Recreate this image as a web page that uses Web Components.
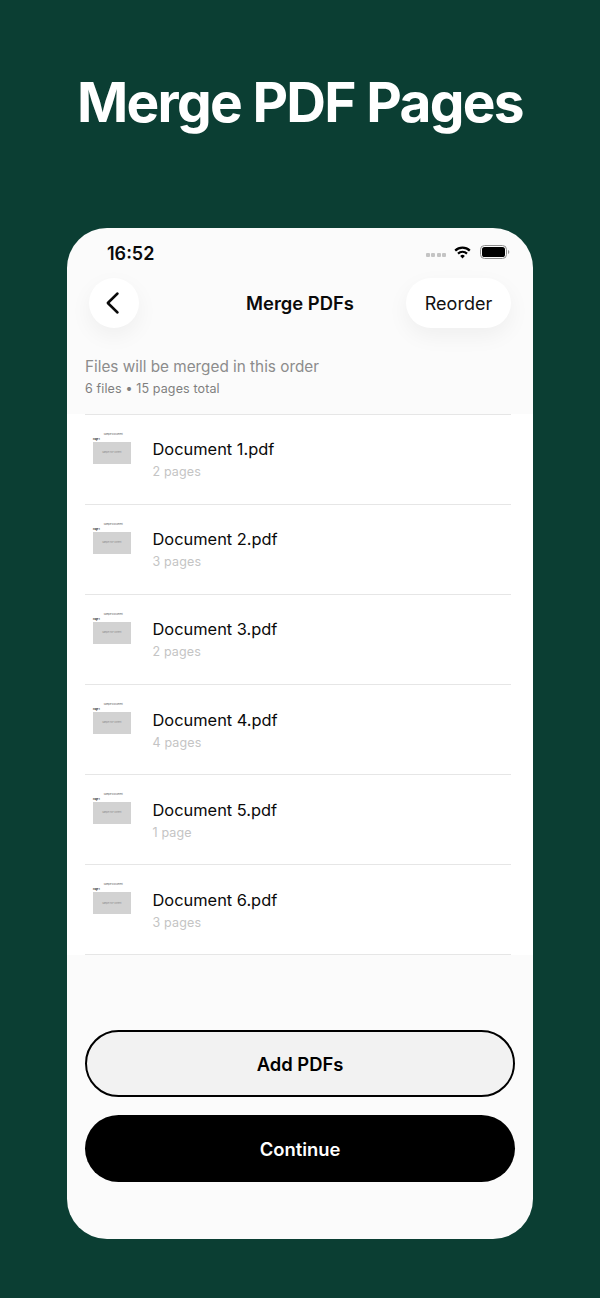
<!DOCTYPE html>
<html lang="en">
<head>
<meta charset="utf-8">
<title>Merge PDF Pages</title>
<style>
  html, body { margin: 0; padding: 0; }
  body { width: 600px; height: 1298px; overflow: hidden; background: #0b3e33; font-family: Inter, "Liberation Sans", sans-serif; }
</style>
</head>
<body>
<promo-screen heading="Merge PDF Pages">
  <status-bar time="16:52"></status-bar>
  <nav-bar heading="Merge PDFs" action="Reorder"></nav-bar>
  <merge-summary note="Files will be merged in this order" count="6 files • 15 pages total"></merge-summary>
  <doc-list>
    <doc-row name="Document 1.pdf" pages="2 pages"></doc-row>
    <doc-row name="Document 2.pdf" pages="3 pages"></doc-row>
    <doc-row name="Document 3.pdf" pages="2 pages"></doc-row>
    <doc-row name="Document 4.pdf" pages="4 pages"></doc-row>
    <doc-row name="Document 5.pdf" pages="1 page"></doc-row>
    <doc-row name="Document 6.pdf" pages="3 pages"></doc-row>
  </doc-list>
  <action-bar slot="footer">
    <pill-button kind="outline">Add PDFs</pill-button>
    <pill-button kind="solid">Continue</pill-button>
  </action-bar>
</promo-screen>

<script>
class PromoScreen extends HTMLElement {
  constructor () {
    super()
    this.attachShadow({ mode: 'open' })
  }

  connectedCallback () {
    this.shadowRoot.innerHTML = `
      <style>
        :host { display: flex; flex-direction: column; align-items: center; height: 1298px; }
        h1 {
          margin: 0; padding-top: 66px; height: 228px; flex: none; box-sizing: border-box;
          font: 700 55px/72px Inter, sans-serif; letter-spacing: -1.7px; color: #fff; white-space: nowrap;
        }
        .phone {
          width: 466px; height: 1011px; flex: none; border-radius: 40px; background: #fbfbfb;
          display: flex; flex-direction: column; overflow: hidden;
        }
        .body { flex: 1; }
      </style>
      <h1>${this.getAttribute('heading')}</h1>
      <div class="phone">
        <div class="body"><slot></slot></div>
        <slot name="footer"></slot>
      </div>
    `
  }
}

class StatusBar extends HTMLElement {
  constructor () {
    super()
    this.attachShadow({ mode: 'open' })
  }

  connectedCallback () {
    this.shadowRoot.innerHTML = `
      <style>
        :host { display: flex; align-items: center; justify-content: space-between; height: 50px; padding: 0 23px 0 41px; }
        .time { font: 600 18px/22px Inter, sans-serif; color: #0a0a0a; position: relative; top: 1px; left: -1px; }
        .icons { display: flex; align-items: center; gap: 8px; position: relative; top: -1px; }
        .dots { display: flex; gap: 1.5px; margin-top: 5px; }
        .dots i { width: 4px; height: 4px; background: #c4c4c4; border-radius: 1px; }
        svg { display: block; }
      </style>
      <span class="time">${this.getAttribute('time')}</span>
      <span class="icons">
        <span class="dots"><i></i><i></i><i></i><i></i></span>
        <svg width="17" height="13" viewBox="0 0 17 13">
          <path d="M1.2 4.6a10.4 10.4 0 0 1 14.6 0" fill="none" stroke="#000" stroke-width="2.200"/>
          <path d="M4 7.6a6.4 6.4 0 0 1 9 0" fill="none" stroke="#000" stroke-width="2.200"/>
          <path d="M6.2 9.9a3.3 3.3 0 0 1 4.6 0L8.5 12.4z" fill="#000"/>
        </svg>
        <svg width="30" height="14" viewBox="0 0 30 14" style="margin-left:1px">
          <rect x="0.5" y="0.5" width="26" height="13" rx="4" fill="none" stroke="#8e8e8e"/>
          <rect x="2" y="2" width="23" height="10" rx="2.6" fill="#000"/>
          <path d="M28 5v4c.8-.3 1.3-1 1.3-2s-.5-1.700-1.300-2z" fill="#9a9a9a"/>
        </svg>
      </span>
    `
  }
}

class NavBar extends HTMLElement {
  constructor () {
    super()
    this.attachShadow({ mode: 'open' })
  }

  connectedCallback () {
    this.shadowRoot.innerHTML = `
      <style>
        :host { display: flex; align-items: center; justify-content: space-between; height: 50px; padding: 0 22px; position: relative; }
        .chip {
          height: 50px; background: #fff; border-radius: 25px; display: flex; align-items: center; justify-content: center;
          box-shadow: 0 8px 22px rgba(0,0,0,.05);
        }
        .back { width: 50px; }
        .action { width: 105px; box-sizing: border-box; padding-top: 1px; font: 400 18px/22px Inter, sans-serif; color: #111; }
        h2 {
          position: absolute; left: 0; right: 0; margin: 0; text-align: center;
          font: 600 18.4px/22px Inter, sans-serif; color: #0a0a0a;
        }
        svg { display: block; }
      </style>
      <div class="chip back">
        <svg width="16" height="24" viewBox="0 0 16 24" style="margin-left:-3px">
          <path d="M12.500 2.500 2.800 12l9.700 9.500" fill="none" stroke="#0a0a0a" stroke-width="2.500" stroke-linecap="round" stroke-linejoin="round"/>
        </svg>
      </div>
      <h2>${this.getAttribute('heading')}</h2>
      <div class="chip action">${this.getAttribute('action')}</div>
    `
  }
}

class MergeSummary extends HTMLElement {
  constructor () {
    super()
    this.attachShadow({ mode: 'open' })
  }

  connectedCallback () {
    this.shadowRoot.innerHTML = `
      <style>
        :host { display: block; height: 85.6px; box-sizing: border-box; padding: 28px 18px 0; }
        .note { font: 400 15.3px/22px Inter, sans-serif; color: #8c8c8c; }
        .count { font: 400 12.500px/18px Inter, sans-serif; letter-spacing: .13px; color: #7f7f7f; margin-top: 2px; }
      </style>
      <div class="note">${this.getAttribute('note')}</div>
      <div class="count">${this.getAttribute('count')}</div>
    `
  }
}

class DocList extends HTMLElement {
  constructor () {
    super()
    this.attachShadow({ mode: 'open' })
  }

  connectedCallback () {
    this.shadowRoot.innerHTML = `
      <style>
        :host { display: block; background: #fff; padding: 0 22px 0 18px; height: 541.4px; box-sizing: border-box; }
        .rule { height: 1px; background: #e6e6e6; }
      </style>
      <div class="rule"></div>
      <slot></slot>
    `
  }
}

class DocRow extends HTMLElement {
  constructor () {
    super()
    this.attachShadow({ mode: 'open' })
  }

  connectedCallback () {
    this.shadowRoot.innerHTML = `
      <style>
        :host { display: flex; align-items: flex-start; height: 90.1px; box-sizing: border-box; border-bottom: 1px solid #e6e6e6; }
        .thumb { width: 67.5px; flex: none; box-sizing: border-box; padding: 18px 22px 0 8px; height: 100%; }
        .thumb .title { font: 400 2.200px/3px Inter, sans-serif; color: #555; text-align: center; padding-left: 3px; }
        .thumb .page { font: 700 2.200px/3px Inter, sans-serif; color: #222; margin-top: 2px; }
        .thumb .sheet { height: 22px; margin-top: 1px; background: #d2d2d2; display: flex; align-items: center; justify-content: center; font: 400 2px/3px Inter, sans-serif; color: #888; }
        .text { padding-top: 23.7px; }
        .name { font: 400 16.4px/22px Inter, sans-serif; color: #0a0a0a; }
        .pages { font: 400 12.500px/18px Inter, sans-serif; letter-spacing: .15px; color: #c4c4c4; margin-top: 3px; }
      </style>
      <div class="thumb">
        <div class="title">Sample Document</div>
        <div class="page">Page 1</div>
        <div class="sheet">Sample PDF content</div>
      </div>
      <div class="text">
        <div class="name">${this.getAttribute('name')}</div>
        <div class="pages">${this.getAttribute('pages')}</div>
      </div>
    `
  }
}

class ActionBar extends HTMLElement {
  constructor () {
    super()
    this.attachShadow({ mode: 'open' })
  }

  connectedCallback () {
    this.shadowRoot.innerHTML = `
      <style>
        :host { display: flex; flex-direction: column; gap: 18px; padding: 0 18px 57px; }
      </style>
      <slot></slot>
    `
  }
}

class PillButton extends HTMLElement {
  constructor () {
    super()
    this.attachShadow({ mode: 'open' })
  }

  connectedCallback () {
    this.shadowRoot.innerHTML = `
      <style>
        :host {
          display: flex; align-items: center; justify-content: center; box-sizing: border-box;
          height: 67px; border-radius: 33.500px; font: 600 18.4px/22px Inter, sans-serif;
        }
        :host([kind="outline"]) { background: #f2f2f2; border: 2px solid #000; color: #000; }
        :host([kind="solid"]) { background: #000; color: #fff; }
      </style>
      <slot></slot>
    `
  }
}

customElements.define('promo-screen', PromoScreen)
customElements.define('status-bar', StatusBar)
customElements.define('nav-bar', NavBar)
customElements.define('merge-summary', MergeSummary)
customElements.define('doc-list', DocList)
customElements.define('doc-row', DocRow)
customElements.define('action-bar', ActionBar)
customElements.define('pill-button', PillButton)
</script>
</body>
</html>
